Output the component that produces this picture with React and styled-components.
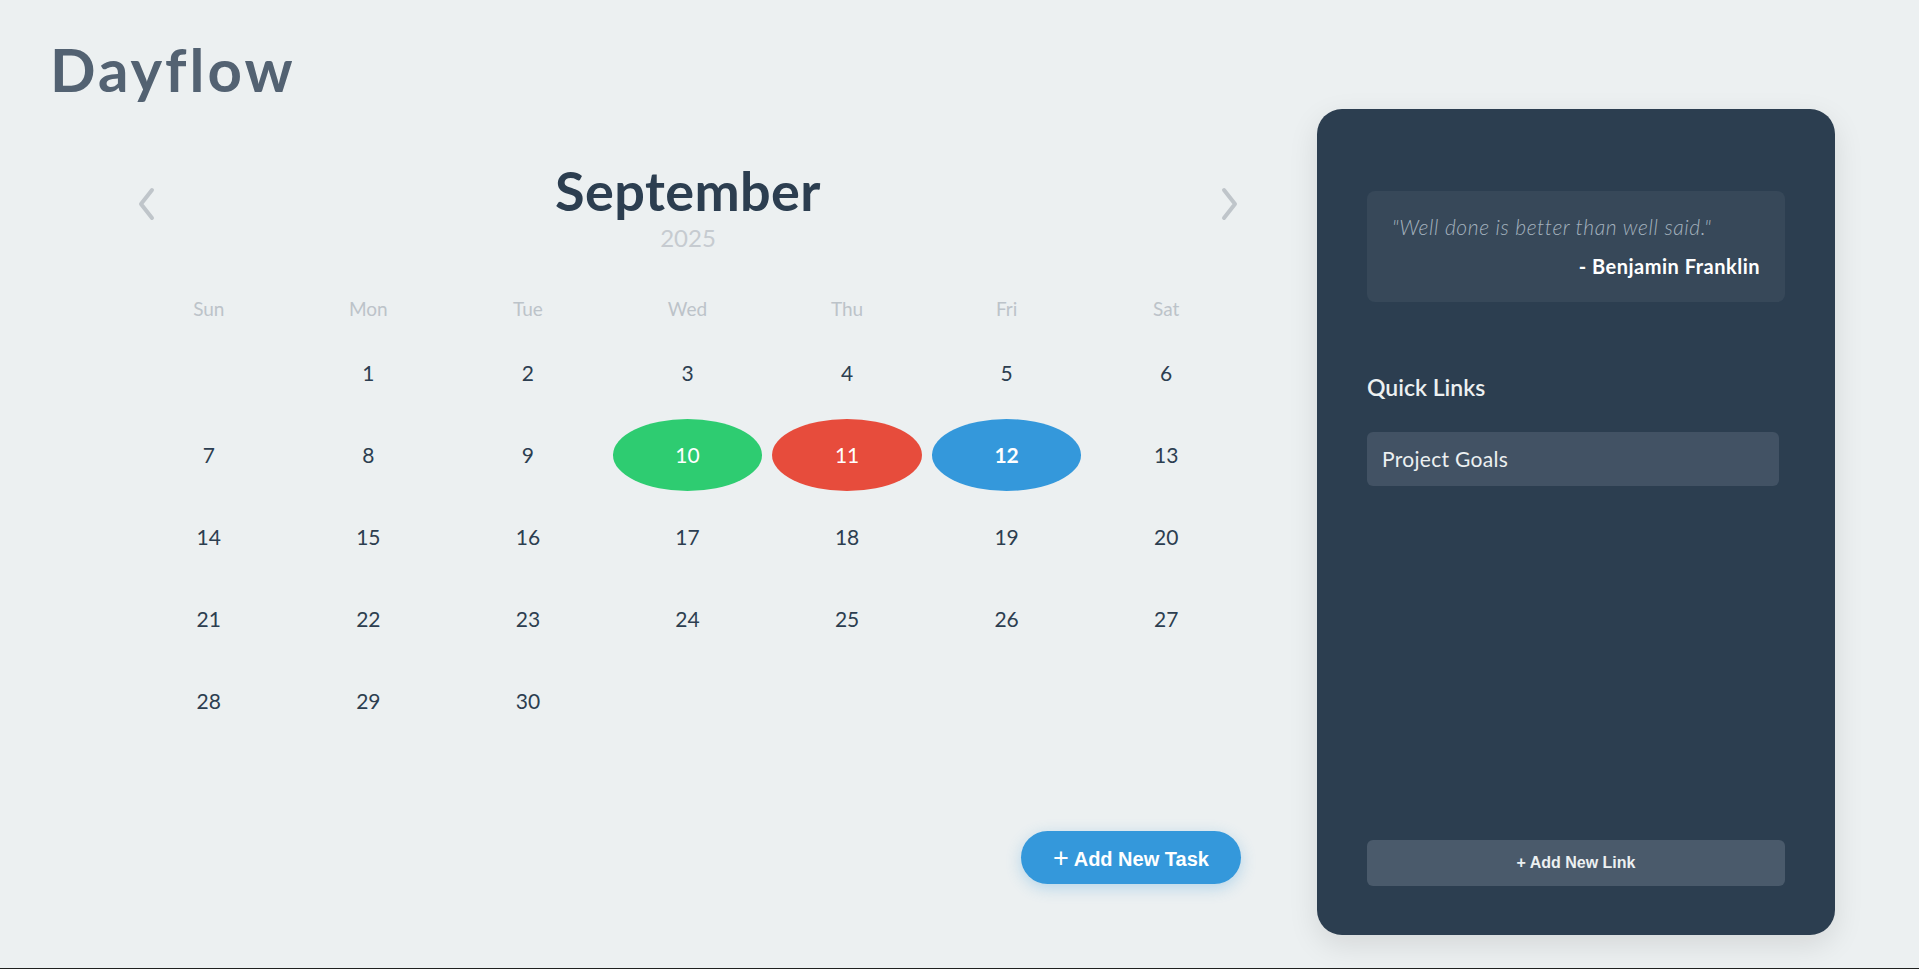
import React from "react";
import styled, { createGlobalStyle } from "styled-components";

const GlobalStyle = createGlobalStyle`
  html {
    background: #1f2120;
  }
  body {
    margin: 0;
    font-family: Lato, "Noto Sans", sans-serif;
  }
`;

const WEEKDAYS = ["Sun", "Mon", "Tue", "Wed", "Thu", "Fri", "Sat"];

// task colours by day of month
const marked = {
  10: { bg: "#2ecc71" },
  11: { bg: "#e74c3c" },
  12: { bg: "#3498db", today: true },
};

const Chevron = ({ dir }) => (
  <svg width="22" height="36" viewBox="0 0 22 36" fill="none">
    <path
      d={dir === "left" ? "M16 4 L5 18 L16 32" : "M6 4 L17 18 L6 32"}
      stroke="#bfc5ca"
      strokeWidth="4"
      strokeLinecap="round"
      strokeLinejoin="round"
    />
  </svg>
);

const App = () => {
  const cells = [null];
  for (let d = 1; d <= 30; d++) cells.push(d);
  while (cells.length % 7) cells.push(null);

  return (
    <Page>
      <GlobalStyle />
      <Title>Dayflow</Title>
      <Main>
        <CalendarSection>
          <NavHeader>
            <NavButton aria-label="previous month">
              <Chevron dir="left" />
            </NavButton>
            <MonthBlock>
              <MonthName>September</MonthName>
              <YearText>2025</YearText>
            </MonthBlock>
            <NavButton aria-label="next month">
              <Chevron dir="right" />
            </NavButton>
          </NavHeader>

          <WeekRow>
            {WEEKDAYS.map((w) => (
              <WeekDay key={w}>{w}</WeekDay>
            ))}
          </WeekRow>

          <DayGrid>
            {cells.map((d, i) => (
              <DayCell
                key={i}
                $bg={d && marked[d] ? marked[d].bg : null}
                $today={d && marked[d] ? marked[d].today : false}
              >
                {d}
              </DayCell>
            ))}
          </DayGrid>

          <Footer>
            <AddTaskButton>
              <span>+</span> Add New Task
            </AddTaskButton>
          </Footer>
        </CalendarSection>

        <SidePanel>
          <QuoteBox>
            <QuoteText>"Well done is better than well said."</QuoteText>
            <QuoteAuthor>- Benjamin Franklin</QuoteAuthor>
          </QuoteBox>

          <SectionTitle>Quick Links</SectionTitle>
          <LinkList>
            <LinkItem>Project Goals</LinkItem>
          </LinkList>

          <AddLinkButton>+ Add New Link</AddLinkButton>
        </SidePanel>
      </Main>
    </Page>
  );
};

const Page = styled.div`
  min-height: calc(100vh - 1px);
  box-sizing: border-box;
  background: #ecf0f1;
  padding-top: 33px;
`;

const Title = styled.h1`
  margin: 0 0 0 50px;
  font-size: 60px;
  line-height: 1.2;
  font-weight: 700;
  letter-spacing: 3px;
  color: #536272;
  height: 76px;
`;

const Main = styled.div`
  display: flex;
  align-items: flex-start;
  padding-left: 134px;
`;

const CalendarSection = styled.section`
  width: 1107px;
  display: flex;
  flex-direction: column;
`;

const NavHeader = styled.div`
  display: flex;
  align-items: center;
  justify-content: space-between;
  margin-top: 50px;
  padding: 0 0 0 1px;
`;

const NavButton = styled.button`
  background: none;
  border: none;
  padding: 0;
  width: 24px;
  height: 40px;
  display: flex;
  align-items: center;
  justify-content: center;
  cursor: pointer;
  margin-top: -4px;
`;

const MonthBlock = styled.div`
  display: flex;
  flex-direction: column;
  align-items: center;
`;

const MonthName = styled.h2`
  margin: 0;
  font-size: 54px;
  line-height: 1.2;
  font-weight: 700;
  color: #2c3e50;
  letter-spacing: 0.4px;
`;

const YearText = styled.div`
  font-size: 24px;
  line-height: 1.2;
  color: #c6cbd0;
`;

const WeekRow = styled.div`
  display: grid;
  grid-template-columns: repeat(7, 1fr);
  column-gap: 10px;
  margin-top: 38px;
  margin-bottom: 10px;
`;

const WeekDay = styled.div`
  height: 36px;
  display: flex;
  align-items: center;
  justify-content: center;
  font-size: 19px;
  color: #bcc3c9;
`;

const DayGrid = styled.div`
  display: grid;
  grid-template-columns: repeat(7, 1fr);
  grid-auto-rows: 72px;
  gap: 10px;
`;

const DayCell = styled.div`
  display: flex;
  align-items: center;
  justify-content: center;
  border-radius: 50%;
  font-size: 21px;
  color: ${(p) => (p.$bg ? "#ffffff" : "#2c3e50")};
  background: ${(p) => p.$bg || "transparent"};
  font-weight: ${(p) => (p.$today ? 700 : 400)};
`;

const Footer = styled.div`
  display: flex;
  justify-content: flex-end;
  margin-top: 94px;
`;

const AddTaskButton = styled.button`
  width: 220px;
  height: 53px;
  border: none;
  border-radius: 27px;
  background: #3498db;
  color: #ffffff;
  font-family: "Liberation Sans", Arial, sans-serif;
  font-weight: 700;
  font-size: 20px;
  box-shadow: 0 4px 15px rgba(52, 152, 219, 0.3);
  cursor: pointer;

  span {
    font-size: 27px;
    font-weight: 400;
    position: relative;
    top: 1px;
  }
`;

const SidePanel = styled.aside`
  margin-left: 76px;
  width: 518px;
  height: 826px;
  box-sizing: border-box;
  padding: 82px 50px 49px;
  background: #2c3e50;
  border-radius: 25px;
  box-shadow: 0 10px 30px rgba(0, 0, 0, 0.1);
  display: flex;
  flex-direction: column;
`;

const QuoteBox = styled.div`
  background: #374859;
  border-radius: 8px;
  padding: 22px 25px 23px;
  display: flex;
  flex-direction: column;
`;

const QuoteText = styled.p`
  margin: 0;
  font-size: 21px;
  line-height: 1.3;
  font-style: italic;
  font-weight: 300;
  letter-spacing: 0.6px;
  color: #a3b1bd;
`;

const QuoteAuthor = styled.div`
  margin-top: 13px;
  align-self: flex-end;
  font-size: 20px;
  line-height: 1.3;
  font-weight: 700;
  letter-spacing: 0.5px;
  color: #ffffff;
`;

const SectionTitle = styled.h3`
  margin: 72px 0 30px;
  font-size: 23px;
  line-height: 1.2;
  font-weight: 600;
  color: #ecf0f1;
`;

const LinkList = styled.div`
  flex: 1;
  display: flex;
  flex-direction: column;
  gap: 10px;
`;

const LinkItem = styled.div`
  width: calc(100% - 6px);
  box-sizing: border-box;
  padding: 13px 15px;
  background: #425264;
  border-radius: 6px;
  font-size: 21px;
  line-height: 28px;
  letter-spacing: 0.3px;
  color: #ecf0f1;
`;

const AddLinkButton = styled.button`
  height: 46px;
  border: none;
  border-radius: 6px;
  background: #4a5a6b;
  color: #ecf0f1;
  font-family: "Liberation Sans", Arial, sans-serif;
  font-weight: 700;
  font-size: 16px;
  cursor: pointer;
`;

export default App;
